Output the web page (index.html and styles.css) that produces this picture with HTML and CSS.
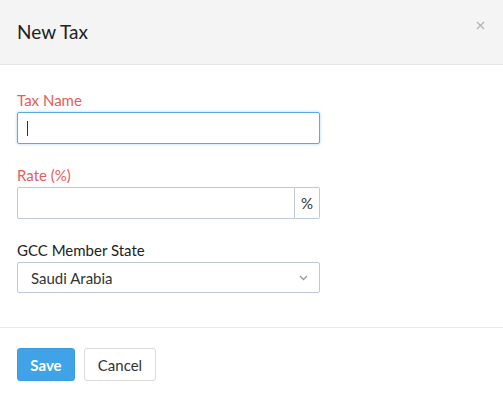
FILE: index.html
```html
<!DOCTYPE html>
<html lang="en">
<head>
    <meta charset="UTF-8">
    <title>New Tax</title>
    <link rel="stylesheet" href="styles.css">
</head>
<body>
    <div class="modal">
        <div class="modal-header">
            <h4 class="modal-title">New Tax</h4>
            <button class="close" type="button">
                <svg width="9" height="9" viewBox="0 0 9 9"><path d="M1 1L8 8M8 1L1 8" stroke="#b5b5b5" stroke-width="1.4"/></svg>
            </button>
        </div>

        <div class="modal-body">
            <div class="form-group">
                <label class="required">Tax Name</label>
                <div class="input-box focused"><span class="caret"></span></div>
            </div>
            <div class="form-group">
                <label class="required">Rate (%)</label>
                <div class="input-group">
                    <div class="input-box"></div>
                    <span class="addon">%</span>
                </div>
            </div>
            <div class="form-group">
                <label>GCC Member State</label>
                <div class="select-box">
                    <span>Saudi Arabia</span>
                    <svg width="9" height="6" viewBox="0 0 9 6"><path d="M1 1L4.5 4.5L8 1" fill="none" stroke="#999" stroke-width="1.3"/></svg>
                </div>
            </div>
        </div>

        <div class="modal-footer">
            <button class="btn btn-primary">Save</button>
            <button class="btn btn-default">Cancel</button>
        </div>
    </div>
</body>
</html>
```

FILE: styles.css
```css
* {
    margin: 0;
    padding: 0;
    box-sizing: border-box;
}

body {
    font-family: Lato, 'Open Sans', sans-serif;
    font-size: 15px;
    color: #222;
    background: #fff;
}

.modal {
    width: 503px;
    height: 398px;
}

.modal-header {
    display: flex;
    justify-content: space-between;
    align-items: flex-start;
    height: 65px;
    padding: 18px 18px 0 17px;
    background: #f4f4f4;
    border-bottom: 1px solid #e6e6e6;
}

.modal-title {
    font-size: 19px;
    font-weight: 400;
    line-height: 28px;
    color: #222;
}

.close {
    border: none;
    background: transparent;
    margin-top: 3px;
    line-height: 0;
}

.modal-body {
    padding: 25px 17px 13px;
    border-bottom: 1px solid #e8e8e8;
}

.form-group {
    width: 303px;
    margin-bottom: 21px;
}

.form-group label {
    display: block;
    line-height: 20px;
    margin-bottom: 2px;
}

.form-group label.required {
    color: #e35d5b;
}

.input-box {
    height: 32px;
    border: 1px solid #bec8d6;
    border-radius: 2px;
    flex: 1;
}

.input-box.focused {
    border-color: #5ea8e4;
    box-shadow: 0 0 3px rgba(94, 168, 228, 0.5);
    padding: 8px 9px;
}

.caret {
    display: block;
    width: 1px;
    height: 15px;
    background: #333;
}

.input-group {
    display: flex;
}

.input-group .input-box {
    border-radius: 2px 0 0 2px;
}

.addon {
    width: 25px;
    height: 32px;
    border: 1px solid #bec8d6;
    border-left: none;
    border-radius: 0 2px 2px 0;
    display: flex;
    align-items: center;
    justify-content: center;
    color: #333;
}

.select-box {
    height: 31px;
    border: 1px solid #bec8d6;
    border-radius: 2px;
    display: flex;
    align-items: center;
    justify-content: space-between;
    padding: 0 11px 0 13px;
    color: #333;
}

.modal-footer {
    padding: 20px 17px;
    display: flex;
    gap: 9px;
}

.btn {
    height: 33px;
    font-family: inherit;
    font-size: 15px;
    border-radius: 3px;
    cursor: pointer;
}

.btn-primary {
    width: 58px;
    background: #40a3e7;
    border: 1px solid #3b9de0;
    color: #fff;
    font-weight: 700;
}

.btn-default {
    width: 72px;
    background: #fff;
    border: 1px solid #dcdcdc;
    color: #333;
}
```
